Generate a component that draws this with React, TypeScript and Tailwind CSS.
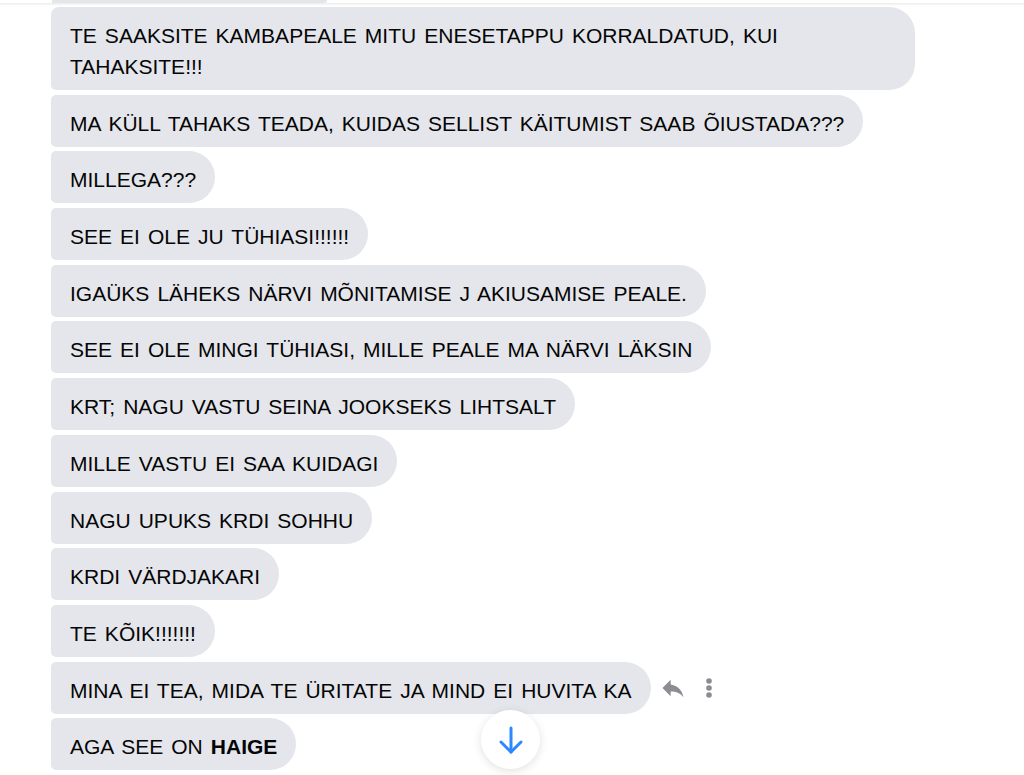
import React from 'react';

interface Message {
  text: React.ReactNode;
  first?: boolean;
  actions?: boolean;
}

const messages: Message[] = [
  { text: 'TE SAAKSITE KAMBAPEALE MITU ENESETAPPU KORRALDATUD, KUI TAHAKSITE!!!', first: true },
  { text: 'MA KÜLL TAHAKS TEADA, KUIDAS SELLIST KÄITUMIST SAAB ÕIUSTADA???' },
  { text: 'MILLEGA???' },
  { text: 'SEE EI OLE JU TÜHIASI!!!!!!' },
  { text: 'IGAÜKS LÄHEKS NÄRVI MÕNITAMISE J AKIUSAMISE PEALE.' },
  { text: 'SEE EI OLE MINGI TÜHIASI, MILLE PEALE MA NÄRVI LÄKSIN' },
  { text: 'KRT; NAGU VASTU SEINA JOOKSEKS LIHTSALT' },
  { text: 'MILLE VASTU EI SAA KUIDAGI' },
  { text: 'NAGU UPUKS KRDI SOHHU' },
  { text: 'KRDI VÄRDJAKARI' },
  { text: 'TE KÕIK!!!!!!!' },
  { text: 'MINA EI TEA, MIDA TE ÜRITATE JA MIND EI HUVITA KA', actions: true },
  {
    text: (
      <>
        AGA SEE ON <span className="font-bold">HAIGE</span>
      </>
    ),
  },
];

const ReplyIcon = () => (
  <svg width="28" height="28" viewBox="0 0 24 24" fill="#8a8d91">
    <path d="M10 9V5l-7 7 7 7v-4.1c5 0 8.5 1.6 11 5.1-1-5-4-10-11-11z" />
  </svg>
);

const MoreIcon = () => (
  <svg width="8" height="22" viewBox="0 0 8 22" fill="#8a8d91">
    <circle cx="4" cy="4" r="2.8" />
    <circle cx="4" cy="11" r="2.8" />
    <circle cx="4" cy="18" r="2.8" />
  </svg>
);

const Bubble: React.FC<Message> = ({ text, first, actions }) => (
  <div className="flex items-center">
    <div
      className={`w-fit max-w-[864px] bg-[#e4e6eb] text-[#050505] text-[21px] leading-[31px] [word-spacing:2.2px] pl-[19px] pr-[19px] pt-[13px] pb-[8px] rounded-r-[26px] rounded-l-[5px] ${
        first ? 'rounded-tl-[8px]' : ''
      }`}
    >
      {text}
    </div>
    {actions && (
      <div className="flex items-center ml-[8px] gap-[18px]">
        <ReplyIcon />
        <MoreIcon />
      </div>
    )}
  </div>
);

export default function App() {
  return (
    <div
      className="relative w-[1024px] h-[775px] overflow-hidden bg-white"
      style={{ fontFamily: '"Liberation Sans", Arial, sans-serif' }}
    >
      <div className="relative h-[3px]">
        <div className="ml-[52px] w-[275px] h-[3px] bg-[#e4e6eb] rounded-br-[6px]" />
      </div>
      <div className="h-[3px] bg-gradient-to-b from-[#ececec] to-white" />
      <div className="flex flex-col gap-[4.7px] pl-[51px] mt-[1px]">
        {messages.map((m, i) => (
          <Bubble key={i} {...m} />
        ))}
      </div>
      <button className="absolute left-[481px] top-[710px] w-[59px] h-[59px] rounded-full bg-white shadow-[0_2px_10px_rgba(0,0,0,0.12)] flex items-center justify-center">
        <svg width="30" height="30" viewBox="0 0 30 30" fill="none" stroke="#2d88ff" strokeWidth="3" strokeLinecap="round" strokeLinejoin="round">
          <path d="M15 3v24" />
          <path d="M5 17l10 10 10-10" />
        </svg>
      </button>
    </div>
  );
}
